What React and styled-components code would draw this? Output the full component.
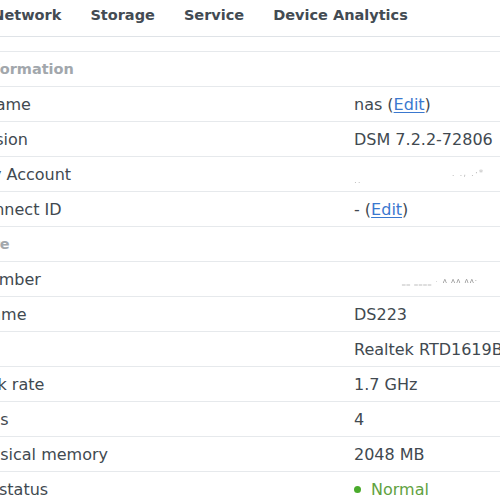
import React from "react";
import styled, { createGlobalStyle } from "styled-components";

const GlobalStyle = createGlobalStyle`
  html, body {
    margin: 0;
    padding: 0;
    background: #fff;
  }
  body {
    font-family: "DejaVu Sans", Verdana, sans-serif;
    color: #414950;
  }
`;

// Layout

const Page = styled.div`
  width: 500px;
  height: 500px;
  overflow: hidden;
  background: #fff;
`;

const Content = styled.div`
  margin-left: -80px;
  width: 580px;
`;

const TabBar = styled.div`
  display: flex;
  height: 37px;
  box-sizing: border-box;
  margin-left: -35px;
  border-bottom: 1px solid #dfe3e7;
`;

const Tab = styled.div`
  padding: 0 14.5px;
  line-height: 30px;
  font-size: 14.5px;
  font-weight: bold;
  color: ${(p) => (p.active ? "#1f6fd1" : "#434b53")};
  white-space: nowrap;
`;

const Table = styled.div`
  margin-top: 14px;
  border-top: 1px solid #e6e9ec;
`;

const Row = styled.div`
  display: grid;
  grid-template-columns: 434px 1fr;
  height: 35px;
  box-sizing: border-box;
  border-bottom: 1px solid #e6e9ec;
  align-items: center;
  font-size: 16px;
  white-space: nowrap;
`;

const SectionRow = styled(Row)`
  font-size: 14.5px;
  font-weight: bold;
  color: #a2a7ac;
`;

const Label = styled.div`
  padding-left: ${(p) => (p.section ? 10 : 8)}px;
`;

const Value = styled.div`
  display: flex;
  align-items: center;
`;

const EditLink = styled.a`
  color: #3a78cf;
  text-decoration: underline;
  text-underline-offset: 2px;
  cursor: pointer;
`;

const Smudge = styled.span`
  display: inline-block;
  margin-left: ${(p) => p.offset || 0}px;
  font-size: ${(p) => p.size || 9}px;
  letter-spacing: 1px;
  color: ${(p) => p.tone || "rgba(70, 70, 70, 0.35)"};
  filter: blur(0.5px);
  transform: translateY(${(p) => p.shift || 0}px);
`;

const StatusDot = styled.span`
  width: 7px;
  height: 7px;
  border-radius: 50%;
  background: #4aab2c;
  margin-right: 10px;
`;

const StatusText = styled.span`
  color: #61a23f;
`;

function Edit({ prefix }) {
  return (
    <span>
      {prefix} (<EditLink>Edit</EditLink>)
    </span>
  );
}

const rows = [
  { section: "Basic information" },
  { label: "Server name", value: <Edit prefix="nas" /> },
  { label: "DSM version", value: "DSM 7.2.2-72806" },
  {
    label: "Synology Account",
    value: (
      <>
        <Smudge shift={6}>..</Smudge>
        <Smudge offset={90} shift={-1}>
          . ., .·*
        </Smudge>
      </>
    ),
  },
  { label: "QuickConnect ID", value: <Edit prefix="-" /> },
  { section: "Hardware" },
  {
    label: "Serial number",
    value: (
      <>
        <Smudge offset={48} shift={3} size={7}>
          ‗‗ ‗‗‗‗ ·
        </Smudge>
        <Smudge offset={4} shift={2} size={7} tone="rgba(50, 50, 50, 0.6)">
          ᴧ ᴧᴧ ᴧᴧ·
        </Smudge>
      </>
    ),
  },
  { label: "Model name", value: "DS223" },
  { label: "CPU", value: "Realtek RTD1619B" },
  { label: "CPU clock rate", value: "1.7 GHz" },
  { label: "CPU cores", value: "4" },
  { label: "Total physical memory", value: "2048 MB" },
  {
    label: "Thermal status",
    value: (
      <>
        <StatusDot />
        <StatusText>Normal</StatusText>
      </>
    ),
  },
];

export default function App() {
  const tabs = ["General", "Network", "Storage", "Service", "Device Analytics"];
  return (
    <Page>
      <GlobalStyle />
      <Content>
        <TabBar>
          {tabs.map((t) => (
            <Tab key={t}>{t}</Tab>
          ))}
        </TabBar>
        <Table>
          {rows.map((r, i) =>
            r.section ? (
              <SectionRow key={i}>
                <Label section>{r.section}</Label>
              </SectionRow>
            ) : (
              <Row key={i}>
                <Label>{r.label}</Label>
                <Value>{r.value}</Value>
              </Row>
            )
          )}
        </Table>
      </Content>
    </Page>
  );
}
